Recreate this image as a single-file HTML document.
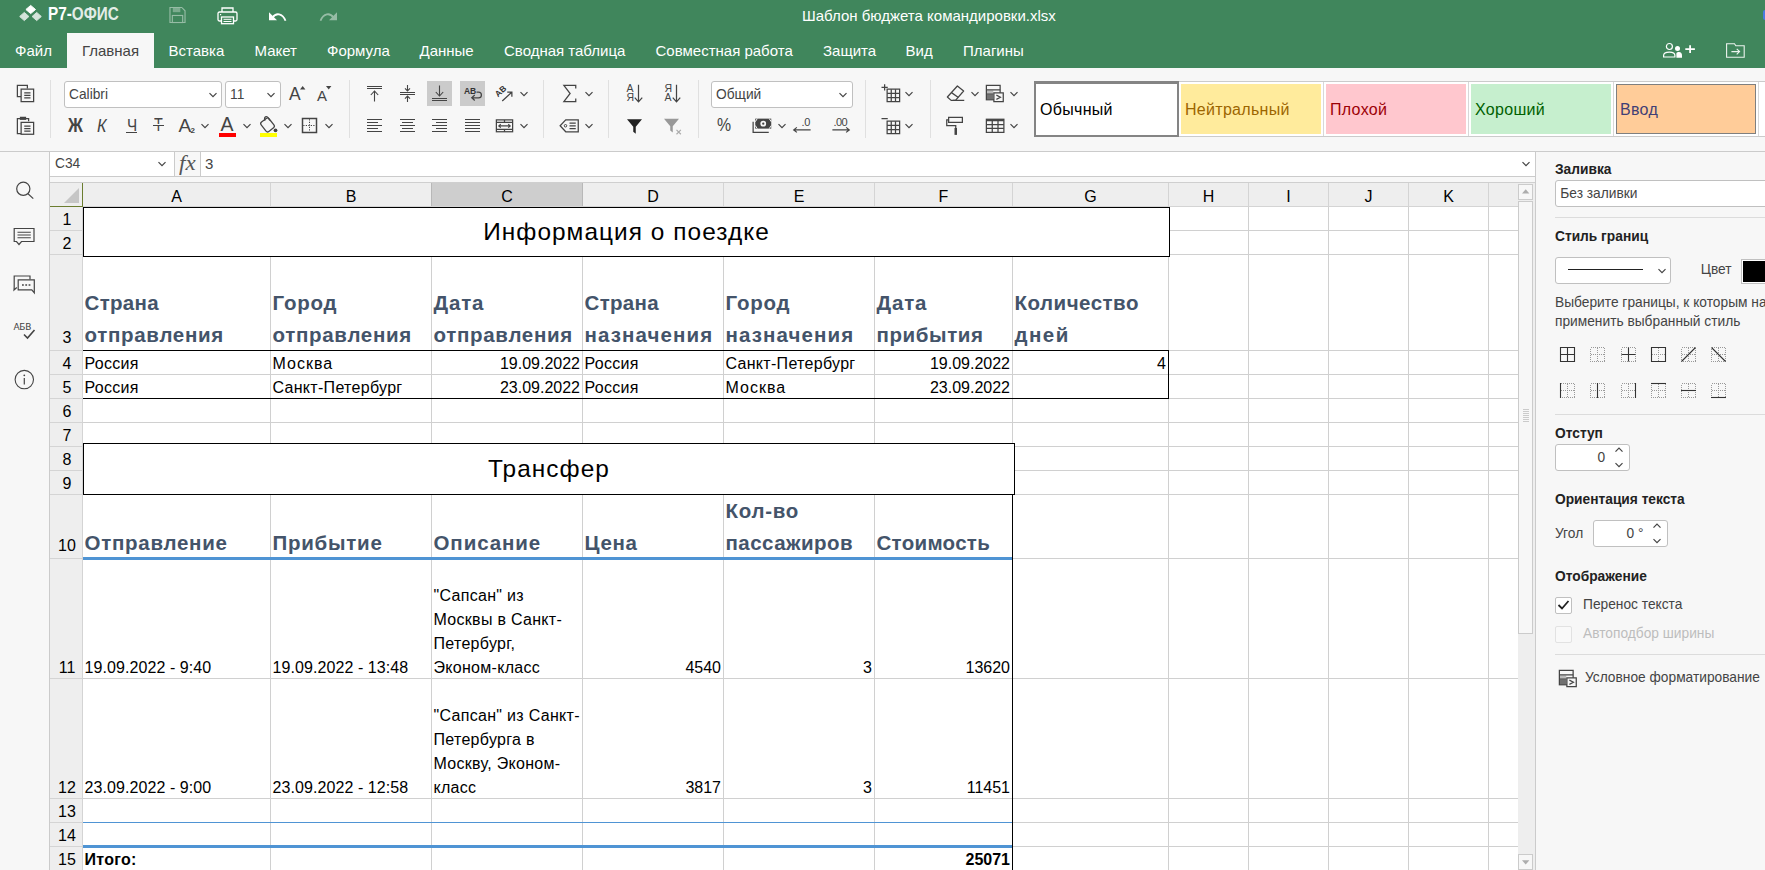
<!DOCTYPE html>
<html lang="ru"><head><meta charset="utf-8"><title>Шаблон бюджета командировки.xlsx</title>
<style>
*{box-sizing:border-box;margin:0;padding:0}
html,body{width:1765px;height:870px;overflow:hidden;background:#f7f7f7}
body{position:relative;font-family:"Liberation Sans",sans-serif;font-size:13.75px;color:#444}
.abs,.ic,.t,.ln{position:absolute}
.ic{overflow:visible}
.t{white-space:nowrap;line-height:1}
#hdr{left:0;top:0;width:1765px;height:68px;background:#40865c}
.tab{position:absolute;top:33px;height:35px;line-height:35px;font-size:15px;color:#fff;white-space:nowrap}
.tab.act{background:#f7f7f7;color:#444;text-align:center}
#tb{left:0;top:68px;width:1765px;height:83px;background:#f7f7f7}
.sep{position:absolute;width:1px;background:#e0e0e0;top:80px;height:58px}
.combo{position:absolute;background:#fff;border:1px solid #c0c0c0;border-radius:3px;height:27px;top:81px;font-size:13.75px;line-height:25px;padding-left:4px;color:#444}
.pressed{position:absolute;background:#cbcbcb;width:25px;height:25px;top:81px}
.cell{position:absolute;font-size:16px;color:#000;white-space:nowrap;line-height:24px;height:24px;overflow:hidden}
.r{text-align:right}
.hd{position:absolute;font-weight:700;color:#44546a;font-size:20.5px;letter-spacing:.5px;line-height:32px;white-space:nowrap}
.gl{position:absolute;background:#d0d0d0}
.bk{position:absolute;background:#000}
.bl{position:absolute;background:#4f94d4}
.colh{position:absolute;top:183px;height:24px;line-height:27px;overflow:hidden;font-size:16px;color:#000;text-align:center;background:#eee;border-right:1px solid #d4d4d4}
.rowh{position:absolute;left:50px;width:32px;font-size:16px;color:#000;text-align:center;border-bottom:1px solid #d4d4d4;display:flex;align-items:flex-end;justify-content:center;line-height:24px;padding-left:2px}
.rp b{font-weight:700;color:#222}
.rp .t{font-size:13.75px}
.spin{position:absolute;background:#fff;border:1px solid #c0c0c0;border-radius:3px;height:27px;width:75px}
.hr{position:absolute;left:1555px;width:210px;height:1px;background:#dcdcdc}
.gi{position:absolute;top:84px;height:50px;width:140px;font-size:16px;letter-spacing:.3px;line-height:52px;padding-left:4px;white-space:nowrap;overflow:hidden}
</style></head><body>

<div id="hdr" class="abs">
<svg class="ic" style="left:18px;top:4px" width="26" height="20" viewBox="0 0 26 20"><path d="M12.7 1.4 L17.5 5.5 L12.7 9.6 L7.9 5.5 Z" fill="#fff" stroke="#fff" stroke-width="1" stroke-linejoin="round"/><path d="M6.3 8.4 L10.9 12.5 L6.3 16.6 L1.7 12.5 Z" fill="#fff" stroke="#fff" stroke-width="1" stroke-linejoin="round" opacity=".78"/><path d="M18.7 8.4 L23.3 12.5 L18.7 16.6 L14.1 12.5 Z" fill="#fff" stroke="#fff" stroke-width="1" stroke-linejoin="round" opacity=".78"/></svg>
<div class="t" style="left:47.5px;top:4.5px;font-size:18px;font-weight:700;color:#fff;transform:scaleX(.85);transform-origin:0 0">Р7-<span style="opacity:.85">ОФИС</span></div>
<svg class="ic" style="left:168.5px;top:7px;opacity:.45" width="17" height="16" viewBox="0 0 18 17"><path d="M1 .5 H13.5 L17 4 V16.5 H1 Z" fill="none" stroke="#fff" stroke-width="1.2"/><rect x="4" y="1" width="8" height="4.5" fill="#fff" opacity=".7"/><rect x="3.5" y="9" width="11" height="7.5" fill="none" stroke="#fff" stroke-width="1.2"/></svg>
<svg class="ic" style="left:217px;top:7px" width="21" height="18" viewBox="0 0 21 18"><path d="M5 5 V1 H16 V5" fill="none" stroke="#fff" stroke-width="1.3"/><rect x="1" y="5" width="19" height="9" rx="1.5" fill="none" stroke="#fff" stroke-width="1.3"/><rect x="4.5" y="10" width="12" height="6.7" fill="#40865c" stroke="#fff" stroke-width="1.3"/><path d="M6.5 12.3 H14.5 M6.5 14.5 H14.5" stroke="#fff" stroke-width="1"/><rect x="3" y="7" width="1.2" height="1.2" fill="#fff"/></svg>
<svg class="ic" style="left:268px;top:11px" width="19" height="11" viewBox="0 0 19 11"><path d="M1 1.2 L1 9.2 L9 9.2 Z" fill="#fff"/><path d="M4.5 6.5 C8 1.5 14.5 2 17.5 9.8" fill="none" stroke="#fff" stroke-width="1.8"/></svg>
<svg class="ic" style="left:319px;top:11px;opacity:.45" width="19" height="11" viewBox="0 0 19 11"><path d="M18 1.2 L18 9.2 L10 9.2 Z" fill="#fff"/><path d="M14.5 6.5 C11 1.5 4.5 2 1.5 9.8" fill="none" stroke="#fff" stroke-width="1.8"/></svg>
<div class="t" style="left:802px;top:8px;font-size:15px;color:#fff">Шаблон бюджета командировки.xlsx</div>
<div class="tab" style="left:15px">Файл</div>
<div class="tab" style="left:168.5px">Вставка</div>
<div class="tab" style="left:254.5px">Макет</div>
<div class="tab" style="left:327px">Формула</div>
<div class="tab" style="left:419.5px">Данные</div>
<div class="tab" style="left:504px">Сводная таблица</div>
<div class="tab" style="left:655.5px">Совместная работа</div>
<div class="tab" style="left:823px">Защита</div>
<div class="tab" style="left:905.5px">Вид</div>
<div class="tab" style="left:963px">Плагины</div>
<div class="tab act" style="left:67px;width:87px">Главная</div>
<svg class="ic" style="left:1662px;top:41px" width="34" height="18" viewBox="0 0 34 18"><circle cx="7.4" cy="5.5" r="3" fill="none" stroke="#fff" stroke-width="1.2"/><path d="M1.6 16 V14.6 C1.6 11.9 4 11.2 7.4 11.2 C10.8 11.2 12.9 11.9 12.9 14.6 V16 Z" fill="none" stroke="#fff" stroke-width="1.2"/><circle cx="15.5" cy="7.6" r="2.5" fill="#fff"/><path d="M14.4 16.7 V12.2 C15 11.4 16 11.1 17 11.1 C19 11.1 20 12.3 20 14.5 V16.7 Z" fill="#fff"/><path d="M28.1 4.2 V12 M23.3 8.1 H32.9" stroke="#fff" stroke-width="1.8"/></svg>
<svg class="ic" style="left:1725px;top:41px" width="22" height="18" viewBox="0 0 22 18"><path d="M1.6 16.2 V2.7 H9.5 L10.8 4.7 H19.2 V16.2 Z" fill="none" stroke="#fff" stroke-width="1.1" opacity=".9"/><path d="M6.4 10.6 H14.5 M11.7 7.8 L14.6 10.6 L11.7 13.4" fill="none" stroke="#fff" stroke-width="1.1" opacity=".9"/></svg>
<div class="abs" style="left:1763px;top:10px;width:2px;height:10px;background:#4a7be0;border-radius:2px 0 0 2px"></div>
</div>
<div id="tb" class="abs"></div>
<div class="abs" style="left:0;top:151px;width:1765px;height:1px;background:#cbcbcb"></div>
<div class="sep" style="left:50px"></div>
<div class="sep" style="left:349px"></div>
<div class="sep" style="left:543px"></div>
<div class="sep" style="left:608px"></div>
<div class="sep" style="left:698px"></div>
<div class="sep" style="left:865px"></div>
<div class="sep" style="left:930px"></div>
<svg class="ic" style="left:12.8px;top:81.0px" width="25" height="25" viewBox="0 0 20 20" ><path d="M11.5 6 V3.5 H3.5 V12.5 H6.5" fill="none" stroke="#444"/><rect x="6.5" y="6.5" width="10" height="10" fill="#f7f7f7" stroke="#444"/><path d="M9 9.5 H14 M9 11.5 H14 M9 13.5 H14" stroke="#444"/></svg>
<svg class="ic" style="left:12.8px;top:113.0px" width="25" height="25" viewBox="0 0 20 20" ><path d="M6.5 16.5 H3.5 V4.5 H12.5 V6.5" fill="none" stroke="#444"/><rect x="5.5" y="3" width="5" height="2.5" fill="#444"/><rect x="6.5" y="7.5" width="10" height="9.5" fill="#f7f7f7" stroke="#444"/><path d="M9 10.5 H14 M9 12.5 H14 M9 14.5 H14" stroke="#444"/></svg>
<div class="combo" style="left:64px;width:158px">Calibri</div><svg class="ic" style="left:207.5px;top:89.5px" width="10" height="10" viewBox="0 0 10 10"><path d="M1.5 3.2 L5 6.7 L8.5 3.2" fill="none" stroke="#444" stroke-width="1.2"/></svg>
<div class="combo" style="left:225px;width:56px">11</div><svg class="ic" style="left:266.0px;top:89.5px" width="10" height="10" viewBox="0 0 10 10"><path d="M1.5 3.2 L5 6.7 L8.5 3.2" fill="none" stroke="#444" stroke-width="1.2"/></svg>
<div class="t" style="left:289px;top:85.5px;font-size:17.5px;color:#444">A</div><svg class="ic" style="left:299.5px;top:86px" width="6" height="4" viewBox="0 0 6 4"><path d="M0 3.5 L2.7 0 L5.4 3.5Z" fill="#444"/></svg>
<div class="t" style="left:317px;top:87.5px;font-size:15px;color:#444">A</div><svg class="ic" style="left:325.5px;top:86px" width="6" height="4" viewBox="0 0 6 4"><path d="M0 0 L2.7 3.5 L5.4 0Z" fill="#444"/></svg>
<div class="t" style="left:68px;top:115px;font-size:20px;font-weight:700;color:#444;transform:scaleX(.82);transform-origin:0 0">Ж</div>
<div class="t" style="left:97px;top:116px;font-size:19px;font-style:italic;color:#444;transform:scaleX(.85);transform-origin:0 0">К</div>
<div class="t" style="left:126.5px;top:117px;font-size:17px;color:#444;transform:scaleX(.9);transform-origin:0 0">Ч</div><div class="abs" style="left:126px;top:132px;width:11px;height:1px;background:#444"></div>
<div class="t" style="left:153.5px;top:116px;font-size:18px;color:#444;transform:scaleX(.8);transform-origin:0 0">Т</div><div class="abs" style="left:152.5px;top:125px;width:11.5px;height:1px;background:#444"></div><div class="abs" style="left:154px;top:123.5px;width:8.5px;height:1.5px;background:#f7f7f7"></div>
<div class="t" style="left:178.5px;top:116px;font-size:19px;color:#444">A</div><div class="t" style="left:190.5px;top:127px;font-size:8px;font-weight:700;color:#444">2</div><svg class="ic" style="left:199.5px;top:120.5px" width="10" height="10" viewBox="0 0 10 10"><path d="M1.5 3.2 L5 6.7 L8.5 3.2" fill="none" stroke="#444" stroke-width="1.2"/></svg>
<div class="t" style="left:220.5px;top:114.5px;font-size:19.5px;color:#444">A</div><div class="abs" style="left:219px;top:133px;width:17px;height:4px;background:#ff0000"></div><svg class="ic" style="left:241.5px;top:120.5px" width="10" height="10" viewBox="0 0 10 10"><path d="M1.5 3.2 L5 6.7 L8.5 3.2" fill="none" stroke="#444" stroke-width="1.2"/></svg>
<svg class="ic" style="left:256.0px;top:113.0px" width="25" height="25" viewBox="0 0 20 20" ><rect x="5.2" y="4.8" width="8" height="9.5" rx="1.6" fill="none" stroke="#444" transform="rotate(-38 9.2 9.5)"/><path d="M7.2 6.2 C6 3 8.6 1.6 10 4.2 L11 6" fill="none" stroke="#444"/><circle cx="15.6" cy="13.8" r="1.5" fill="#444"/></svg><div class="abs" style="left:260px;top:133px;width:17px;height:4px;background:#ffff00"></div><svg class="ic" style="left:282.5px;top:120.5px" width="10" height="10" viewBox="0 0 10 10"><path d="M1.5 3.2 L5 6.7 L8.5 3.2" fill="none" stroke="#444" stroke-width="1.2"/></svg>
<svg class="ic" style="left:296.8px;top:113.0px" width="25" height="25" viewBox="0 0 20 20" ><rect x="4.4" y="4.4" width="11.2" height="11.2" fill="none" stroke="#444" stroke-width="1.2"/><path d="M10 5 V15 M5 10 H15" stroke="#444" stroke-width=".8" stroke-dasharray="1 1"/></svg><svg class="ic" style="left:323.5px;top:120.5px" width="10" height="10" viewBox="0 0 10 10"><path d="M1.5 3.2 L5 6.7 L8.5 3.2" fill="none" stroke="#444" stroke-width="1.2"/></svg>
<div class="pressed" style="left:427px"></div><div class="pressed" style="left:460px"></div>
<svg class="ic" style="left:362px;top:81px" width="25" height="25" viewBox="0 0 25 25"><path d="M5 5.5 H20 M5 7.5 H20" stroke="#444" shape-rendering="crispEdges"/><path d="M12.5 20.5 V10.2 M8.8 14 L12.5 10 L16.2 14" fill="none" stroke="#444" stroke-width="1.1"/></svg>
<svg class="ic" style="left:395px;top:81px" width="25" height="25" viewBox="0 0 25 25"><path d="M5 11.5 H20 M5 13.5 H20" stroke="#444" shape-rendering="crispEdges"/><path d="M12.5 4 V9.8 M10 7.3 L12.5 9.9 L15 7.3 M12.5 21 V15.2 M10 17.7 L12.5 15.1 L15 17.7" fill="none" stroke="#444" stroke-width="1.1"/></svg>
<svg class="ic" style="left:427px;top:81px" width="25" height="25" viewBox="0 0 25 25"><path d="M5 17.5 H20 M5 19.5 H20" stroke="#444" shape-rendering="crispEdges"/><path d="M12.5 4.5 V14.8 M8.8 11 L12.5 15 L16.2 11" fill="none" stroke="#444" stroke-width="1.1"/></svg>
<div class="t" style="left:464px;top:86.5px;font-size:8.5px;font-weight:700;color:#333;letter-spacing:-.1px">AB</div><svg class="ic" style="left:460.0px;top:81.0px" width="25" height="25" viewBox="0 0 20 20" ><path d="M13.2 8.8 H14.8 C17.9 8.8 17.9 13.4 14.8 13.4 H9.6 M11.8 11.2 L9.4 13.4 L11.8 15.6" fill="none" stroke="#444"/></svg>
<div class="t" style="left:499px;top:90px;font-size:8.5px;font-weight:700;color:#333;transform:rotate(-42deg);transform-origin:0 100%">AB</div><svg class="ic" style="left:492.0px;top:81.0px" width="25" height="25" viewBox="0 0 20 20" ><path d="M8.2 16 L15.6 9.2 M12.2 8.8 H15.9 V12.5" fill="none" stroke="#444"/></svg><svg class="ic" style="left:518.5px;top:88.5px" width="10" height="10" viewBox="0 0 10 10"><path d="M1.5 3.2 L5 6.7 L8.5 3.2" fill="none" stroke="#444" stroke-width="1.2"/></svg>
<svg class="ic" style="left:362px;top:113px" width="25" height="25" viewBox="0 0 25 25"><path d="M5 6.5 H20 M5 9.5 H16 M5 12.5 H20 M5 15.5 H16 M5 18.5 H20 " stroke="#444" shape-rendering="crispEdges"/></svg>
<svg class="ic" style="left:395px;top:113px" width="25" height="25" viewBox="0 0 25 25"><path d="M5.0 6.5 H20.0 M7.0 9.5 H18.0 M5.0 12.5 H20.0 M7.0 15.5 H18.0 M5.0 18.5 H20.0 " stroke="#444" shape-rendering="crispEdges"/></svg>
<svg class="ic" style="left:427px;top:113px" width="25" height="25" viewBox="0 0 25 25"><path d="M5 6.5 H20 M9 9.5 H20 M5 12.5 H20 M9 15.5 H20 M5 18.5 H20 " stroke="#444" shape-rendering="crispEdges"/></svg>
<svg class="ic" style="left:460px;top:113px" width="25" height="25" viewBox="0 0 25 25"><path d="M5 6.5 H20 M5 9.5 H20 M5 12.5 H20 M5 15.5 H20 M5 18.5 H20 " stroke="#444" shape-rendering="crispEdges"/></svg>
<svg class="ic" style="left:492.0px;top:113.0px" width="25" height="25" viewBox="0 0 20 20" ><rect x="3.5" y="5.5" width="13" height="9.5" fill="none" stroke="#444"/><path d="M3.5 7.5 H16.5 M3.5 13 H16.5 M10 5.5 V7.5 M10 13 V15" stroke="#444"/><path d="M5.5 10.3 H14.5 M7 8.9 L5.4 10.3 L7 11.7 M13 8.9 L14.6 10.3 L13 11.7" fill="none" stroke="#444" stroke-width=".9"/></svg><svg class="ic" style="left:518.5px;top:120.5px" width="10" height="10" viewBox="0 0 10 10"><path d="M1.5 3.2 L5 6.7 L8.5 3.2" fill="none" stroke="#444" stroke-width="1.2"/></svg>
<svg class="ic" style="left:557.2px;top:81.0px" width="25" height="25" viewBox="0 0 20 20" ><path d="M15 6 V3.5 H5.5 L10.5 10 L5.5 16.5 H15 V14" fill="none" stroke="#444"/></svg><svg class="ic" style="left:583.5px;top:88.5px" width="10" height="10" viewBox="0 0 10 10"><path d="M1.5 3.2 L5 6.7 L8.5 3.2" fill="none" stroke="#444" stroke-width="1.2"/></svg>
<svg class="ic" style="left:557.2px;top:113.0px" width="25" height="25" viewBox="0 0 20 20" ><path d="M7 5.5 H17 V15 H7 L2.5 10.2 Z" fill="none" stroke="#444"/><circle cx="6.8" cy="10.2" r="1" fill="none" stroke="#444" stroke-width=".8"/><path d="M10 8 H15 M10 10.2 H15 M10 12.4 H15" stroke="#444"/></svg><svg class="ic" style="left:583.5px;top:120.5px" width="10" height="10" viewBox="0 0 10 10"><path d="M1.5 3.2 L5 6.7 L8.5 3.2" fill="none" stroke="#444" stroke-width="1.2"/></svg>
<div class="t" style="left:626.5px;top:83.5px;font-size:10.5px;font-weight:400;color:#444;line-height:9.5px">А<br>Я</div><svg class="ic" style="left:626.0px;top:81.0px" width="25" height="25" viewBox="0 0 20 20" ><path d="M10 3 V16.5 M7 13.3 L10 16.7 L13 13.3" fill="none" stroke="#444"/></svg>
<div class="t" style="left:664.5px;top:83.5px;font-size:10.5px;font-weight:400;color:#444;line-height:9.5px">Я<br>А</div><svg class="ic" style="left:664.0px;top:81.0px" width="25" height="25" viewBox="0 0 20 20" ><path d="M10 3 V16.5 M7 13.3 L10 16.7 L13 13.3" fill="none" stroke="#444"/></svg>
<svg class="ic" style="left:621.5px;top:113.0px" width="25" height="25" viewBox="0 0 20 20" ><path d="M4 5 H16 L11 11 V16.5 L9 15 V11 Z" fill="#222"/></svg>
<svg class="ic" style="left:658.5px;top:113.0px" width="25" height="25" viewBox="0 0 20 20" ><path d="M4 4.5 H16 L11 10.5 V15.5 L9 14 V10.5 Z" fill="#999"/><path d="M14 13.5 L17.5 17 M17.5 13.5 L14 17" stroke="#aaa" stroke-width=".9"/></svg>
<div class="combo" style="left:711px;width:142px">Общий</div><svg class="ic" style="left:838.0px;top:89.5px" width="10" height="10" viewBox="0 0 10 10"><path d="M1.5 3.2 L5 6.7 L8.5 3.2" fill="none" stroke="#444" stroke-width="1.2"/></svg>
<div class="t" style="left:716.5px;top:116px;font-size:18px;color:#444;transform:scaleX(.88);transform-origin:0 0">%</div>
<svg class="ic" style="left:750.0px;top:113.0px" width="25" height="25" viewBox="0 0 20 20" ><rect x="4.2" y="4.5" width="12.8" height="8" fill="#444"/><circle cx="10.6" cy="8.5" r="2.3" fill="#f7f7f7"/><circle cx="10.6" cy="8.5" r=".9" fill="#444"/><path d="M2.5 7 V15.5 H15" fill="none" stroke="#444"/><path d="M4.2 7 l1.6 -2.5 M17 7 l-1.6 -2.5 M4.2 10 l1.6 2.5 M17 10 l-1.6 2.5" stroke="#f7f7f7" stroke-width=".8"/></svg><svg class="ic" style="left:776.5px;top:120.5px" width="10" height="10" viewBox="0 0 10 10"><path d="M1.5 3.2 L5 6.7 L8.5 3.2" fill="none" stroke="#444" stroke-width="1.2"/></svg>
<div class="t" style="left:801.5px;top:116.5px;font-size:11px;color:#444;letter-spacing:-.3px">.0</div><svg class="ic" style="left:789.8px;top:113.0px" width="25" height="25" viewBox="0 0 20 20" ><path d="M3 13.5 H16.5 M5.5 11.5 L3 13.5 L5.5 15.5" fill="none" stroke="#444"/></svg>
<div class="t" style="left:833.5px;top:116.5px;font-size:11px;color:#444;letter-spacing:-.6px">.00</div><svg class="ic" style="left:828.0px;top:113.0px" width="25" height="25" viewBox="0 0 20 20" ><path d="M3.5 13.5 H17 M14.5 11.5 L17 13.5 L14.5 15.5" fill="none" stroke="#444"/></svg>
<svg class="ic" style="left:879.1px;top:81.0px" width="25" height="25" viewBox="0 0 20 20" ><rect x="6.5" y="6.5" width="10" height="10" fill="none" stroke="#444"/><path d="M9.8 6.5 V16.5 M13.2 6.5 V16.5 M6.5 9.8 H16.5 M6.5 13.2 H16.5" stroke="#444"/><path d="M2 5 H7 M4.5 2.5 V7.5" stroke="#444"/></svg><svg class="ic" style="left:904.4px;top:88.5px" width="10" height="10" viewBox="0 0 10 10"><path d="M1.5 3.2 L5 6.7 L8.5 3.2" fill="none" stroke="#444" stroke-width="1.2"/></svg>
<svg class="ic" style="left:879.1px;top:113.0px" width="25" height="25" viewBox="0 0 20 20" ><rect x="6.5" y="6.5" width="10" height="10" fill="none" stroke="#444"/><path d="M9.8 6.5 V16.5 M13.2 6.5 V16.5 M6.5 9.8 H16.5 M6.5 13.2 H16.5" stroke="#444"/><path d="M2 4.5 H7" stroke="#444"/></svg><svg class="ic" style="left:904.4px;top:120.5px" width="10" height="10" viewBox="0 0 10 10"><path d="M1.5 3.2 L5 6.7 L8.5 3.2" fill="none" stroke="#444" stroke-width="1.2"/></svg>
<svg class="ic" style="left:943.0px;top:81.0px" width="25" height="25" viewBox="0 0 20 20" ><path d="M11.5 4 L16.5 8 L10 15.5 H6.5 L3.5 12.8 Z" fill="none" stroke="#444" stroke-linejoin="round"/><path d="M6.8 9.3 L12.3 13.2 M8 15.5 H17" stroke="#444"/></svg><svg class="ic" style="left:969.7px;top:88.5px" width="10" height="10" viewBox="0 0 10 10"><path d="M1.5 3.2 L5 6.7 L8.5 3.2" fill="none" stroke="#444" stroke-width="1.2"/></svg>
<svg class="ic" style="left:981.5px;top:81.0px" width="25" height="25" viewBox="0 0 20 20" ><rect x="3.5" y="3.5" width="11" height="11.5" fill="none" stroke="#444"/><path d="M3.5 7 H14.5 M3.5 10.5 H9" stroke="#444"/><rect x="4" y="11" width="5" height="3.5" fill="#444" opacity=".75"/><rect x="4" y="7.5" width="5" height="3" fill="#444" opacity=".35"/><rect x="9.5" y="9.5" width="7.5" height="7" fill="#f7f7f7" stroke="#444"/><path d="M11.5 11.3 L14.8 13 L11.5 14.7" fill="none" stroke="#444" stroke-width=".9"/></svg><svg class="ic" style="left:1008.5px;top:88.5px" width="10" height="10" viewBox="0 0 10 10"><path d="M1.5 3.2 L5 6.7 L8.5 3.2" fill="none" stroke="#444" stroke-width="1.2"/></svg>
<svg class="ic" style="left:943.2px;top:113.0px" width="25" height="25" viewBox="0 0 20 20" ><rect x="4.5" y="3.5" width="11" height="4" fill="none" stroke="#444"/><path d="M4.5 5.5 H3 V10 H10.2 V12" fill="none" stroke="#444"/><rect x="9.2" y="12" width="2" height="5.5" fill="#444"/></svg>
<svg class="ic" style="left:981.8px;top:113.0px" width="25" height="25" viewBox="0 0 20 20" ><rect x="3.5" y="5" width="14" height="10.5" fill="none" stroke="#444"/><rect x="3.5" y="5" width="14" height="1.6" fill="#444"/><path d="M3.5 9.3 H17.5 M3.5 12.3 H17.5 M8.2 6 V15.5 M12.8 6 V15.5" stroke="#444"/></svg><svg class="ic" style="left:1008.5px;top:120.5px" width="10" height="10" viewBox="0 0 10 10"><path d="M1.5 3.2 L5 6.7 L8.5 3.2" fill="none" stroke="#444" stroke-width="1.2"/></svg>
<div class="abs" style="left:1034px;top:81px;width:740px;height:56px;background:#fff;border:1px solid #cbcbcb"></div>
<div class="abs" style="left:1323px;top:82px;width:1px;height:54px;background:#d8d8d8"></div>
<div class="abs" style="left:1468px;top:82px;width:1px;height:54px;background:#d8d8d8"></div>
<div class="abs" style="left:1613px;top:82px;width:1px;height:54px;background:#d8d8d8"></div>
<div class="abs" style="left:1758px;top:82px;width:1px;height:54px;background:#d8d8d8"></div>
<div class="abs" style="left:1034px;top:81px;width:145px;height:56px;border:2px solid #848484;border-top-width:3px;background:#fff"></div>
<div class="gi" style="left:1036px;color:#000;background:transparent">Обычный</div>
<div class="gi" style="left:1181px;color:#9c6500;background:#ffeb9c">Нейтральный</div>
<div class="gi" style="left:1326px;color:#9c0006;background:#ffc7ce">Плохой</div>
<div class="gi" style="left:1471px;color:#006100;background:#c6efce">Хороший</div>
<div class="gi" style="left:1616px;color:#3f3f76;background:#ffcc99;border:1px solid #7f7f7f;line-height:50px;padding-left:3px">Ввод</div>
<div class="abs" style="left:0;top:152px;width:49px;height:718px;background:#f7f7f7"></div><div class="abs" style="left:49px;top:152px;width:1px;height:718px;background:#cbcbcb"></div>
<svg class="ic" style="left:14px;top:180px" width="22" height="20" viewBox="0 0 22 20"><circle cx="9.3" cy="8.8" r="6.6" fill="none" stroke="#444" stroke-width="1.2"/><path d="M14 13.7 L19.3 18.6" stroke="#444" stroke-width="1.2"/></svg>
<svg class="ic" style="left:13px;top:227px" width="23" height="20" viewBox="0 0 23 20"><path d="M1.2 1.5 H21 V14.5 H8.5 L6 17.5 L3.5 14.5 H1.2 Z" fill="none" stroke="#444" stroke-width="1.2"/><path d="M4.5 5.2 H17.8 M4.5 8 H17.8 M4.5 10.8 H17.8" stroke="#444" stroke-width="1.1"/></svg>
<svg class="ic" style="left:13px;top:275px" width="23" height="19" viewBox="0 0 23 19"><path d="M17 4.5 V1 H1.2 V12 L1 15 L3.8 12.5" fill="none" stroke="#444" stroke-width="1.2"/><path d="M5.2 4.8 H21.3 V17.8 L18.8 14.8 H5.2 Z" fill="#f7f7f7" stroke="#444" stroke-width="1.2"/><path d="M9 10 H10.8 M12.3 10 H14.1 M15.6 10 H17.4" stroke="#444" stroke-width="1.6"/></svg>
<div class="t" style="left:13.5px;top:323px;font-size:9px;font-weight:400;color:#444;letter-spacing:-.3px;font-family:'DejaVu Sans','Liberation Sans',sans-serif">АБВ</div><svg class="ic" style="left:22px;top:328px" width="14" height="12" viewBox="0 0 14 12"><path d="M2 6.5 L5.5 10 L12.5 2" fill="none" stroke="#444" stroke-width="1.6"/></svg>
<svg class="ic" style="left:14px;top:369px" width="21" height="21" viewBox="0 0 21 21"><circle cx="10.3" cy="10.6" r="9.2" fill="none" stroke="#444" stroke-width="1.1"/><path d="M10.3 9 V15.5" stroke="#444" stroke-width="1.2"/><circle cx="10.3" cy="6.3" r=".9" fill="#444"/></svg>
<div class="abs" style="left:50px;top:152px;width:1485px;height:24px;background:#fff"></div>
<div class="abs" style="left:50px;top:176px;width:1485px;height:1px;background:#cbcbcb"></div>
<div class="abs" style="left:50px;top:177px;width:1485px;height:5px;background:#f7f7f7"></div>
<div class="abs" style="left:50px;top:182px;width:1485px;height:1px;background:#cfcfcf"></div>
<div class="abs" style="left:174px;top:152px;width:27px;height:24px;background:#f7f7f7;border-left:1px solid #cbcbcb;border-right:1px solid #cbcbcb"></div>
<div class="t" style="left:55px;top:157px;font-size:13.75px;color:#444">C34</div><svg class="ic" style="left:156.5px;top:159.0px" width="10" height="10" viewBox="0 0 10 10"><path d="M1.5 3.2 L5 6.7 L8.5 3.2" fill="none" stroke="#444" stroke-width="1.2"/></svg>
<div class="t" style="left:178.5px;top:152.5px;font-size:20px;font-style:italic;font-family:'Liberation Serif',serif;color:#555;transform:scaleX(1.15);transform-origin:0 0">fx</div>
<div class="t" style="left:205px;top:155.5px;font-size:15px;color:#444">3</div>
<svg class="ic" style="left:1520.5px;top:158.5px" width="10" height="10" viewBox="0 0 10 10"><path d="M1.5 3.2 L5 6.7 L8.5 3.2" fill="none" stroke="#444" stroke-width="1.2"/></svg>
<div class="abs" style="left:50px;top:183px;width:1468px;height:687px;background:#fff"></div>
<div class="gl" style="left:270px;top:207px;width:1px;height:663px"></div>
<div class="gl" style="left:431px;top:207px;width:1px;height:663px"></div>
<div class="gl" style="left:582px;top:207px;width:1px;height:663px"></div>
<div class="gl" style="left:723px;top:207px;width:1px;height:663px"></div>
<div class="gl" style="left:874px;top:207px;width:1px;height:663px"></div>
<div class="gl" style="left:1012px;top:207px;width:1px;height:663px"></div>
<div class="gl" style="left:1168px;top:207px;width:1px;height:663px"></div>
<div class="gl" style="left:1248px;top:207px;width:1px;height:663px"></div>
<div class="gl" style="left:1328px;top:207px;width:1px;height:663px"></div>
<div class="gl" style="left:1408px;top:207px;width:1px;height:663px"></div>
<div class="gl" style="left:1488px;top:207px;width:1px;height:663px"></div>
<div class="gl" style="left:83px;top:230px;width:1435px;height:1px"></div>
<div class="gl" style="left:83px;top:254px;width:1435px;height:1px"></div>
<div class="gl" style="left:83px;top:350px;width:1435px;height:1px"></div>
<div class="gl" style="left:83px;top:374px;width:1435px;height:1px"></div>
<div class="gl" style="left:83px;top:398px;width:1435px;height:1px"></div>
<div class="gl" style="left:83px;top:422px;width:1435px;height:1px"></div>
<div class="gl" style="left:83px;top:446px;width:1435px;height:1px"></div>
<div class="gl" style="left:83px;top:470px;width:1435px;height:1px"></div>
<div class="gl" style="left:83px;top:494px;width:1435px;height:1px"></div>
<div class="gl" style="left:83px;top:558px;width:1435px;height:1px"></div>
<div class="gl" style="left:83px;top:678px;width:1435px;height:1px"></div>
<div class="gl" style="left:83px;top:798px;width:1435px;height:1px"></div>
<div class="gl" style="left:83px;top:822px;width:1435px;height:1px"></div>
<div class="gl" style="left:83px;top:846px;width:1435px;height:1px"></div>
<div class="abs" style="left:50px;top:183px;width:1468px;height:24px;background:#eee"></div>
<div class="colh" style="left:83px;width:188px;">A</div>
<div class="colh" style="left:271px;width:161px;">B</div>
<div class="colh" style="left:432px;width:151px;background:#cecece;border-right-color:#b8b8b8;">C</div>
<div class="colh" style="left:583px;width:141px;">D</div>
<div class="colh" style="left:724px;width:151px;">E</div>
<div class="colh" style="left:875px;width:138px;">F</div>
<div class="colh" style="left:1013px;width:156px;">G</div>
<div class="colh" style="left:1169px;width:80px;">H</div>
<div class="colh" style="left:1249px;width:80px;">I</div>
<div class="colh" style="left:1329px;width:80px;">J</div>
<div class="colh" style="left:1409px;width:80px;">K</div>
<div class="abs" style="left:431px;top:183px;width:1px;height:24px;background:#b8b8b8"></div>
<div class="abs" style="left:83px;top:206px;width:1435px;height:1px;background:#d4d4d4"></div>
<div class="abs" style="left:50px;top:183px;width:33px;height:24px;background:#eee;border-right:1px solid #6b7d2f;border-bottom:1px solid #6b7d2f"></div>
<svg class="ic" style="left:64px;top:188px" width="15" height="15" viewBox="0 0 15 15"><path d="M15 0 V15 H0 Z" fill="#c6c6c6"/></svg>
<div class="abs" style="left:50px;top:207px;width:33px;height:663px;background:#eee;border-right:1px solid #d4d4d4"></div>
<div class="rowh" style="top:207px;height:24px"><span style="position:relative;top:1.5px">1</span></div>
<div class="rowh" style="top:231px;height:24px"><span style="position:relative;top:1.5px">2</span></div>
<div class="rowh" style="top:255px;height:96px"><span style="position:relative;top:0px">3</span></div>
<div class="rowh" style="top:351px;height:24px"><span style="position:relative;top:1.5px">4</span></div>
<div class="rowh" style="top:375px;height:24px"><span style="position:relative;top:1.5px">5</span></div>
<div class="rowh" style="top:399px;height:24px"><span style="position:relative;top:1.5px">6</span></div>
<div class="rowh" style="top:423px;height:24px"><span style="position:relative;top:1.5px">7</span></div>
<div class="rowh" style="top:447px;height:24px"><span style="position:relative;top:1.5px">8</span></div>
<div class="rowh" style="top:471px;height:24px"><span style="position:relative;top:1.5px">9</span></div>
<div class="rowh" style="top:495px;height:64px"><span style="position:relative;top:0px">10</span></div>
<div class="rowh" style="top:559px;height:120px"><span style="position:relative;top:1.5px">11</span></div>
<div class="rowh" style="top:679px;height:120px"><span style="position:relative;top:1.5px">12</span></div>
<div class="rowh" style="top:799px;height:24px"><span style="position:relative;top:1.5px">13</span></div>
<div class="rowh" style="top:823px;height:24px"><span style="position:relative;top:1.5px">14</span></div>
<div class="rowh" style="top:847px;height:24px"><span style="position:relative;top:1.5px">15</span></div>
<div class="abs" style="left:83px;top:207px;width:1087px;height:50px;background:#fff;border:1px solid #000"></div>
<div class="abs" style="left:83px;top:443px;width:932px;height:52px;background:#fff;border:1px solid #000"></div>
<div class="cell" style="left:84px;top:208px;width:1085px;height:48px;line-height:47px;text-align:center;font-size:24.4px;letter-spacing:1.05px;overflow:visible">Информация о поездке</div>
<div class="cell" style="left:84px;top:444px;width:930px;height:50px;line-height:50px;text-align:center;font-size:24.4px;letter-spacing:1.05px;overflow:visible">Трансфер</div>
<div class="bk" style="left:83px;top:350px;width:1086px;height:1px"></div>
<div class="bk" style="left:83px;top:398px;width:1086px;height:1px"></div>
<div class="bk" style="left:1168px;top:350px;width:1px;height:49px"></div>
<div class="bk" style="left:1012px;top:495px;width:1px;height:375px"></div>
<div class="bl" style="left:83px;top:557px;width:929px;height:3px"></div>
<div class="bl" style="left:83px;top:822px;width:929px;height:1px"></div>
<div class="bl" style="left:83px;top:845px;width:929px;height:3px"></div>
<div class="hd" style="left:84.5px;top:287px"><span style="letter-spacing:0.33px">Страна</span><br><span style="letter-spacing:0.7px">отправления</span></div>
<div class="hd" style="left:272.5px;top:287px"><span style="letter-spacing:0.78px">Город</span><br><span style="letter-spacing:0.7px">отправления</span></div>
<div class="hd" style="left:433.5px;top:287px"><span style="letter-spacing:0.85px">Дата</span><br><span style="letter-spacing:0.7px">отправления</span></div>
<div class="hd" style="left:584.5px;top:287px"><span style="letter-spacing:0.33px">Страна</span><br><span style="letter-spacing:1.1px">назначения</span></div>
<div class="hd" style="left:725.5px;top:287px"><span style="letter-spacing:0.78px">Город</span><br><span style="letter-spacing:1.1px">назначения</span></div>
<div class="hd" style="left:876.5px;top:287px"><span style="letter-spacing:0.85px">Дата</span><br><span style="letter-spacing:0.6px">прибытия</span></div>
<div class="hd" style="left:1014.5px;top:287px"><span style="letter-spacing:0.5px">Количество</span><br><span style="letter-spacing:1.45px">дней</span></div>
<div class="hd" style="left:84.5px;top:527px"><span style="letter-spacing:0.72px">Отправление</span></div>
<div class="hd" style="left:272.5px;top:527px"><span style="letter-spacing:0.75px">Прибытие</span></div>
<div class="hd" style="left:433.5px;top:527px"><span style="letter-spacing:0.9px">Описание</span></div>
<div class="hd" style="left:584.5px;top:527px"><span style="letter-spacing:0.7px">Цена</span></div>
<div class="hd" style="left:725.5px;top:495px"><span style="letter-spacing:0.7px">Кол-во</span><br><span style="letter-spacing:0.46px">пассажиров</span></div>
<div class="hd" style="left:876.5px;top:527px"><span style="letter-spacing:0.3px">Стоимость</span></div>
<div class="cell" style="left:83px;top:352px;width:187px;height:24px;padding-left:1.5px;letter-spacing:.3px;">Россия</div>
<div class="cell" style="left:271px;top:352px;width:160px;height:24px;padding-left:1.5px;letter-spacing:.3px;"><span style="letter-spacing:1px">Москва</span></div>
<div class="cell" style="left:432px;top:352px;width:150px;height:24px;text-align:right;padding-right:2px;">19.09.2022</div>
<div class="cell" style="left:583px;top:352px;width:140px;height:24px;padding-left:1.5px;letter-spacing:.3px;">Россия</div>
<div class="cell" style="left:724px;top:352px;width:150px;height:24px;padding-left:1.5px;letter-spacing:.3px;">Санкт-Петербург</div>
<div class="cell" style="left:875px;top:352px;width:137px;height:24px;text-align:right;padding-right:2px;">19.09.2022</div>
<div class="cell" style="left:1013px;top:352px;width:155px;height:24px;text-align:right;padding-right:2px;">4</div>
<div class="cell" style="left:83px;top:376px;width:187px;height:24px;padding-left:1.5px;letter-spacing:.3px;">Россия</div>
<div class="cell" style="left:271px;top:376px;width:160px;height:24px;padding-left:1.5px;letter-spacing:.3px;">Санкт-Петербург</div>
<div class="cell" style="left:432px;top:376px;width:150px;height:24px;text-align:right;padding-right:2px;">23.09.2022</div>
<div class="cell" style="left:583px;top:376px;width:140px;height:24px;padding-left:1.5px;letter-spacing:.3px;">Россия</div>
<div class="cell" style="left:724px;top:376px;width:150px;height:24px;padding-left:1.5px;letter-spacing:.3px;"><span style="letter-spacing:1px">Москва</span></div>
<div class="cell" style="left:875px;top:376px;width:137px;height:24px;text-align:right;padding-right:2px;">23.09.2022</div>
<div class="cell" style="left:83px;top:656px;width:187px;height:24px;padding-left:1.5px;letter-spacing:.08px;">19.09.2022 - 9:40</div>
<div class="cell" style="left:271px;top:656px;width:160px;height:24px;padding-left:1.5px;letter-spacing:.08px;">19.09.2022 - 13:48</div>
<div class="cell" style="left:432px;top:584px;width:150px;height:96px;padding-left:1.5px;letter-spacing:.3px;">"Сапсан" из<br>Москвы в Санкт-<br>Петербург,<br>Эконом-класс</div>
<div class="cell" style="left:583px;top:656px;width:140px;height:24px;text-align:right;padding-right:2px;">4540</div>
<div class="cell" style="left:724px;top:656px;width:150px;height:24px;text-align:right;padding-right:2px;">3</div>
<div class="cell" style="left:875px;top:656px;width:137px;height:24px;text-align:right;padding-right:2px;">13620</div>
<div class="cell" style="left:83px;top:776px;width:187px;height:24px;padding-left:1.5px;letter-spacing:.08px;">23.09.2022 - 9:00</div>
<div class="cell" style="left:271px;top:776px;width:160px;height:24px;padding-left:1.5px;letter-spacing:.08px;">23.09.2022 - 12:58</div>
<div class="cell" style="left:432px;top:704px;width:150px;height:96px;padding-left:1.5px;letter-spacing:.3px;">"Сапсан" из Санкт-<br>Петербурга в<br>Москву, Эконом-<br>класс</div>
<div class="cell" style="left:583px;top:776px;width:140px;height:24px;text-align:right;padding-right:2px;">3817</div>
<div class="cell" style="left:724px;top:776px;width:150px;height:24px;text-align:right;padding-right:2px;">3</div>
<div class="cell" style="left:875px;top:776px;width:137px;height:24px;text-align:right;padding-right:2px;">11451</div>
<div class="cell" style="left:83px;top:848px;width:187px;height:24px;padding-left:1.5px;letter-spacing:.3px;font-weight:700;">Итого:</div>
<div class="cell" style="left:875px;top:848px;width:137px;height:24px;text-align:right;padding-right:2px;font-weight:700;">25071</div>
<div class="abs" style="left:1518px;top:183px;width:17px;height:687px;background:#eee"></div>
<div class="abs" style="left:1518px;top:184px;width:15px;height:16px;background:#f7f7f7;border:1px solid #cbcbcb"></div>
<svg class="ic" style="left:1522px;top:189px" width="8" height="5" viewBox="0 0 8 5"><path d="M0 4.5 L3.7 .3 L7.4 4.5Z" fill="#adadad"/></svg>
<div class="abs" style="left:1518px;top:201px;width:15px;height:433px;background:#f7f7f7;border:1px solid #cbcbcb"></div>
<div class="abs" style="left:1522.5px;top:409px;width:6px;height:14px;background:repeating-linear-gradient(#cbcbcb 0 1px,#f7f7f7 1px 2px)"></div>
<div class="abs" style="left:1518px;top:854px;width:15px;height:16px;background:#f7f7f7;border:1px solid #cbcbcb"></div>
<svg class="ic" style="left:1522px;top:859.5px" width="8" height="5" viewBox="0 0 8 5"><path d="M0 .3 L3.7 4.5 L7.4 .3Z" fill="#adadad"/></svg>
<div class="abs rp" style="left:1535px;top:152px;width:230px;height:718px;background:#f7f7f7;border-left:1px solid #cbcbcb"></div>
<div class="rp">
<div class="t" style="left:1555px;top:163.2px;font-size:13.75px;font-weight:700;color:#222;">Заливка</div>
<div class="abs" style="left:1555px;top:179.5px;width:230px;height:27.5px;background:#fff;border:1px solid #c0c0c0;border-radius:3px"></div>
<div class="t" style="left:1560.3px;top:187.0px;font-size:13.75px;color:#444;">Без заливки</div>
<div class="hr" style="top:217px"></div>
<div class="t" style="left:1555px;top:230.3px;font-size:13.75px;font-weight:700;color:#222;">Стиль границ</div>
<div class="abs" style="left:1555px;top:257px;width:116px;height:27px;background:#fff;border:1px solid #c0c0c0;border-radius:3px"></div>
<div class="abs" style="left:1568px;top:269px;width:75px;height:1px;background:#222"></div><svg class="ic" style="left:1656.5px;top:265.5px" width="10" height="10" viewBox="0 0 10 10"><path d="M1.5 3.2 L5 6.7 L8.5 3.2" fill="none" stroke="#444" stroke-width="1.2"/></svg>
<div class="t" style="left:1700.8px;top:263.4px;font-size:13.75px;color:#444;">Цвет</div>
<div class="abs" style="left:1741px;top:258.5px;width:30px;height:25px;background:#000;border:1px solid #c0c0c0;box-shadow:inset 0 0 0 1px #fff"></div>
<div class="t" style="left:1555px;top:296.1px;font-size:13.75px;color:#444;">Выберите границы, к которым на</div>
<div class="t" style="left:1555px;top:314.6px;font-size:13.75px;color:#444;">применить выбранный стиль</div>
<svg class="ic" style="left:1560px;top:347px" width="15" height="15" viewBox="0 0 15 15"><path d="M.5 .5 H14.5 V14.5 H.5 Z M7.5 .5 V14.5 M.5 7.5 H14.5" fill="none" stroke="#333" stroke-width="1.1"/></svg>
<svg class="ic" style="left:1590px;top:347px" width="15" height="15" viewBox="0 0 15 15"><path d="M.5 .5 H14.5 V14.5 H.5 Z M7.5 .5 V14.5 M.5 7.5 H14.5" fill="none" stroke="#999" stroke-width="1" stroke-dasharray="1 1" shape-rendering="crispEdges"/><path d="" fill="none" stroke="#333" stroke-width="1.1"/></svg>
<svg class="ic" style="left:1621px;top:347px" width="15" height="15" viewBox="0 0 15 15"><path d="M.5 .5 H14.5 V14.5 H.5 Z M7.5 .5 V14.5 M.5 7.5 H14.5" fill="none" stroke="#999" stroke-width="1" stroke-dasharray="1 1" shape-rendering="crispEdges"/><path d="M7.5 .5 V14.5 M.5 7.5 H14.5" fill="none" stroke="#333" stroke-width="1.1"/></svg>
<svg class="ic" style="left:1651px;top:347px" width="15" height="15" viewBox="0 0 15 15"><path d="M.5 .5 H14.5 V14.5 H.5 Z M7.5 .5 V14.5 M.5 7.5 H14.5" fill="none" stroke="#999" stroke-width="1" stroke-dasharray="1 1" shape-rendering="crispEdges"/><path d="M.5 .5 H14.5 V14.5 H.5 Z" fill="none" stroke="#333" stroke-width="1.1"/></svg>
<svg class="ic" style="left:1681px;top:347px" width="15" height="15" viewBox="0 0 15 15"><path d="M.5 .5 H14.5 V14.5 H.5 Z M7.5 .5 V14.5 M.5 7.5 H14.5" fill="none" stroke="#999" stroke-width="1" stroke-dasharray="1 1" shape-rendering="crispEdges"/><path d="M.5 14.5 L14.5 .5" fill="none" stroke="#333" stroke-width="1.1"/></svg>
<svg class="ic" style="left:1711px;top:347px" width="15" height="15" viewBox="0 0 15 15"><path d="M.5 .5 H14.5 V14.5 H.5 Z M7.5 .5 V14.5 M.5 7.5 H14.5" fill="none" stroke="#999" stroke-width="1" stroke-dasharray="1 1" shape-rendering="crispEdges"/><path d="M.5 .5 L14.5 14.5" fill="none" stroke="#333" stroke-width="1.1"/></svg>
<svg class="ic" style="left:1560px;top:383px" width="15" height="15" viewBox="0 0 15 15"><path d="M.5 .5 H14.5 V14.5 H.5 Z M7.5 .5 V14.5 M.5 7.5 H14.5" fill="none" stroke="#999" stroke-width="1" stroke-dasharray="1 1" shape-rendering="crispEdges"/><path d="M.5 0 V15" fill="none" stroke="#333" stroke-width="1.1"/></svg>
<svg class="ic" style="left:1590px;top:383px" width="15" height="15" viewBox="0 0 15 15"><path d="M.5 .5 H14.5 V14.5 H.5 Z M7.5 .5 V14.5 M.5 7.5 H14.5" fill="none" stroke="#999" stroke-width="1" stroke-dasharray="1 1" shape-rendering="crispEdges"/><path d="M7.5 0 V15" fill="none" stroke="#333" stroke-width="1.1"/></svg>
<svg class="ic" style="left:1621px;top:383px" width="15" height="15" viewBox="0 0 15 15"><path d="M.5 .5 H14.5 V14.5 H.5 Z M7.5 .5 V14.5 M.5 7.5 H14.5" fill="none" stroke="#999" stroke-width="1" stroke-dasharray="1 1" shape-rendering="crispEdges"/><path d="M14.5 0 V15" fill="none" stroke="#333" stroke-width="1.1"/></svg>
<svg class="ic" style="left:1651px;top:383px" width="15" height="15" viewBox="0 0 15 15"><path d="M.5 .5 H14.5 V14.5 H.5 Z M7.5 .5 V14.5 M.5 7.5 H14.5" fill="none" stroke="#999" stroke-width="1" stroke-dasharray="1 1" shape-rendering="crispEdges"/><path d="M0 .5 H15" fill="none" stroke="#333" stroke-width="1.1"/></svg>
<svg class="ic" style="left:1681px;top:383px" width="15" height="15" viewBox="0 0 15 15"><path d="M.5 .5 H14.5 V14.5 H.5 Z M7.5 .5 V14.5 M.5 7.5 H14.5" fill="none" stroke="#999" stroke-width="1" stroke-dasharray="1 1" shape-rendering="crispEdges"/><path d="M0 7.5 H15" fill="none" stroke="#333" stroke-width="1.1"/></svg>
<svg class="ic" style="left:1711px;top:383px" width="15" height="15" viewBox="0 0 15 15"><path d="M.5 .5 H14.5 V14.5 H.5 Z M7.5 .5 V14.5 M.5 7.5 H14.5" fill="none" stroke="#999" stroke-width="1" stroke-dasharray="1 1" shape-rendering="crispEdges"/><path d="M0 14.5 H15" fill="none" stroke="#333" stroke-width="1.1"/></svg>
<div class="hr" style="top:414px"></div>
<div class="t" style="left:1555px;top:427.2px;font-size:13.75px;font-weight:700;color:#222;">Отступ</div>
<div class="spin" style="left:1555px;top:444px"></div>
<div class="t" style="left:1597.5px;top:451.1px;font-size:13.75px;color:#444;">0</div>
<svg class="ic" style="left:1613.7px;top:445px" width="10" height="10" viewBox="0 0 10 10"><path d="M1.5 6.7 L5 3.2 L8.5 6.7" fill="none" stroke="#444" stroke-width="1.2"/></svg><svg class="ic" style="left:1613.7px;top:459.5px" width="10" height="10" viewBox="0 0 10 10"><path d="M1.5 3.2 L5 6.7 L8.5 3.2" fill="none" stroke="#444" stroke-width="1.2"/></svg>
<div class="t" style="left:1555px;top:493.4px;font-size:13.75px;font-weight:700;color:#222;">Ориентация текста</div>
<div class="t" style="left:1555px;top:527.4px;font-size:13.75px;color:#444;">Угол</div>
<div class="spin" style="left:1593px;top:520px"></div>
<div class="t" style="left:1626.5px;top:527.4px;font-size:13.75px;color:#444;">0 °</div>
<svg class="ic" style="left:1651.5px;top:521px" width="10" height="10" viewBox="0 0 10 10"><path d="M1.5 6.7 L5 3.2 L8.5 6.7" fill="none" stroke="#444" stroke-width="1.2"/></svg><svg class="ic" style="left:1651.5px;top:535.5px" width="10" height="10" viewBox="0 0 10 10"><path d="M1.5 3.2 L5 6.7 L8.5 3.2" fill="none" stroke="#444" stroke-width="1.2"/></svg>
<div class="t" style="left:1555px;top:570.1px;font-size:13.75px;font-weight:700;color:#222;">Отображение</div>
<div class="abs" style="left:1555px;top:596.5px;width:17px;height:17px;background:#fff;border:1px solid #c0c0c0;border-radius:2px"></div>
<svg class="ic" style="left:1557px;top:599px" width="13" height="12" viewBox="0 0 13 12"><path d="M1.5 6 L5 9.5 L11.5 2" fill="none" stroke="#222" stroke-width="1.8"/></svg>
<div class="t" style="left:1583px;top:598.3px;font-size:13.75px;color:#444;">Перенос текста</div>
<div class="abs" style="left:1555px;top:625.5px;width:17px;height:17px;background:#f9f9f9;border:1px solid #e2e2e2;border-radius:2px"></div>
<div class="t" style="left:1583px;top:627.3px;font-size:13.75px;color:#bdbdbd;">Автоподбор ширины</div>
<div class="hr" style="top:654px"></div>
<svg class="ic" style="left:1555.0px;top:665.5px" width="25" height="25" viewBox="0 0 20 20" ><rect x="3.5" y="3.5" width="11" height="11.5" fill="none" stroke="#444"/><path d="M3.5 7 H14.5 M3.5 10.5 H9" stroke="#444"/><rect x="4" y="11" width="5" height="3.5" fill="#444" opacity=".75"/><rect x="4" y="7.5" width="5" height="3" fill="#444" opacity=".35"/><rect x="9.5" y="9.5" width="7.5" height="7" fill="#f7f7f7" stroke="#444"/><path d="M11.5 11.3 L14.8 13 L11.5 14.7" fill="none" stroke="#444" stroke-width=".9"/></svg>
<div class="t" style="left:1585px;top:670.7px;font-size:13.75px;color:#444;">Условное форматирование</div>
</div>
</body></html>
